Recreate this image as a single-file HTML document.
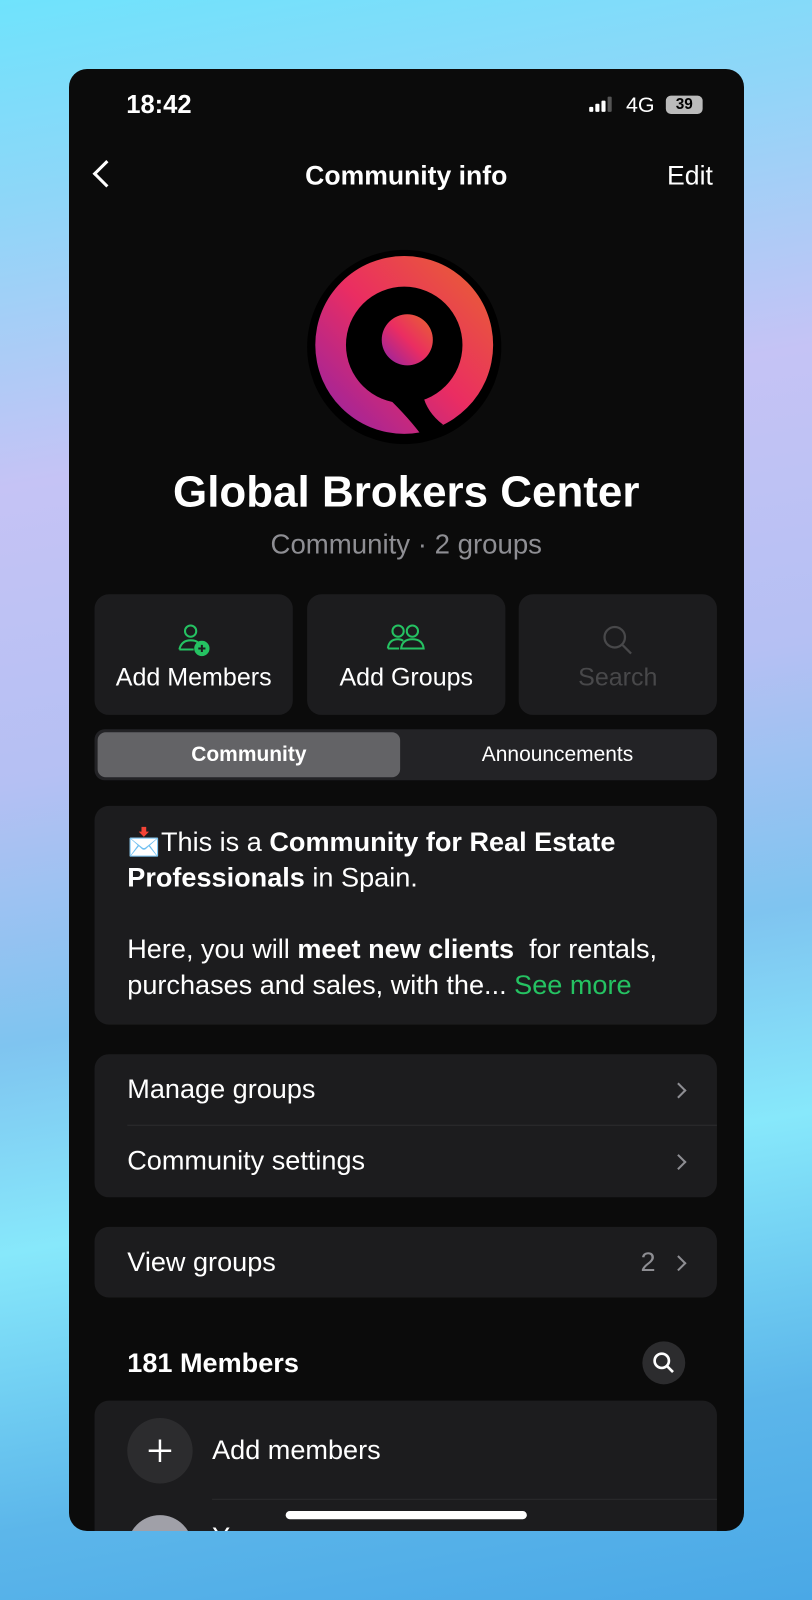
<!DOCTYPE html>
<html><head><meta charset="utf-8"><style>
*{margin:0;padding:0;box-sizing:border-box}
body{width:812px;height:1600px;overflow:hidden;font-family:"Liberation Sans",sans-serif;
background:linear-gradient(170deg,#6fe3fc 0%,#8fd6f8 12%,#c5c3f5 28%,#b5c0f3 45%,#7fc4f0 60%,#87e8fb 72%,#5cb6ea 88%,#4aa8e6 100%);position:relative}
.ph{position:absolute;left:69px;top:69px;width:675px;height:1462px;background:#0b0b0b;border-radius:18px;overflow:hidden;color:#fff}
.in{position:absolute;left:0;top:0;width:660px;height:1430px;transform:scale(1.022);transform-origin:0 0}
.a{position:absolute}
.card{position:absolute;left:25px;width:609px;background:#1c1c1e;border-radius:14px}
.btn{position:absolute;top:514px;width:194px;height:118px;background:#1c1c1e;border-radius:14px;text-align:center;font-size:24.5px}
.btn svg{position:absolute;left:80px;top:28px}
.btn span{position:absolute;left:0;right:0;top:68px}
.row{position:absolute;left:32px;font-size:26.5px}
.chev{position:absolute;right:32px;width:11px;height:11px;border-right:2px solid #8e8e93;border-top:2px solid #8e8e93;transform:rotate(45deg)}
</style></head><body>
<div class="ph"><div class="in">
<div class="a" style="left:56px;top:21px;font-size:25px;font-weight:bold">18:42</div>
<div class="a" style="left:509px;top:27px;display:flex;align-items:flex-end;gap:2px">
<div style="width:4px;height:5px;background:#fff;border-radius:1px"></div><div style="width:4px;height:8px;background:#fff;border-radius:1px"></div><div style="width:4px;height:11px;background:#fff;border-radius:1px"></div><div style="width:4px;height:15px;background:#555;border-radius:1px"></div></div>
<div class="a" style="left:545px;top:24px;font-size:21px">4G</div>
<div class="a" style="left:584px;top:26px;width:36px;height:18px;background:#bbb;border-radius:5px;color:#000;font-size:15px;font-weight:bold;text-align:center;line-height:18px">39</div>
<div class="a" style="left:27px;top:93px;width:19px;height:19px;border-left:3px solid #fff;border-bottom:3px solid #fff;transform:rotate(45deg)"></div>
<div class="a" style="left:0;right:0;top:89px;text-align:center;font-size:26px;font-weight:bold">Community info</div>
<div class="a" style="right:30px;top:89px;font-size:26px">Edit</div>
<svg class="a" style="left:232px;top:176px" width="192" height="192" viewBox="0 0 192 192">
<defs><linearGradient id="g" x1="1" y1="0" x2="0" y2="1"><stop offset="0" stop-color="#e8652f"/><stop offset=".5" stop-color="#ea2d62"/><stop offset="1" stop-color="#8f22a8"/></linearGradient></defs>
<circle cx="96" cy="96" r="95" fill="#000"/>
<circle cx="96" cy="94" r="87" fill="url(#g)"/>
<circle cx="96" cy="94" r="57" fill="#000"/>
<path d="M72 138 Q96 160 112 181 Q124 180 134 172 Q118 160 114 142 Z" fill="#000"/>
<circle cx="99" cy="89" r="25" fill="url(#g)"/>
</svg>
<div class="a" style="left:-20px;right:-20px;top:390px;text-align:center;font-size:43px;font-weight:bold">Global Brokers Center</div>
<div class="a" style="left:0;right:0;top:450px;text-align:center;font-size:27px;color:#8e8e93">Community · 2 groups</div>
<div class="btn" style="left:25px"><svg width="34" height="34" viewBox="0 0 34 34" fill="none" stroke="#25c262" stroke-width="2"><circle cx="14" cy="8" r="5.5"/><path d="M3 26 Q5 17 14 17 Q19 17 21 19"/><path d="M3 26H17"/><circle cx="25" cy="25" r="6.5" fill="#25c262"/><path d="M25 21.5v7M21.5 25h7" stroke="#1c1c1e"/></svg><span>Add Members</span></div>
<div class="btn" style="left:233px"><svg width="40" height="34" viewBox="0 0 40 34" fill="none" stroke="#25c262" stroke-width="2" style="left:77px"><circle cx="12" cy="8" r="5.5"/><circle cx="26" cy="8" r="5.5"/><path d="M2 25 Q3 16 12 16 Q15 16 17 17.5"/><path d="M2 25H13"/><path d="M15 25 Q16 16 26 16 Q36 16 37 25Z"/></svg><span>Add Groups</span></div>
<div class="btn" style="left:440px;color:#48484a"><svg width="34" height="34" viewBox="0 0 34 34" fill="none" stroke="#48484a" stroke-width="2.2"><circle cx="14" cy="14" r="10"/><path d="M21 21l9 9"/></svg><span>Search</span></div>
<div class="a" style="left:25px;top:646px;width:609px;height:50px;background:#232326;border-radius:10px"></div>
<div class="a" style="left:28px;top:649px;width:296px;height:44px;background:#636366;border-radius:8px;text-align:center;line-height:44px;font-size:20.5px;font-weight:bold">Community</div>
<div class="a" style="left:324px;top:649px;width:308px;height:44px;text-align:center;line-height:44px;font-size:20.5px">Announcements</div>
<div class="card" style="top:721px;height:214px;padding:18px 20px 0 32px;font-size:26.5px;line-height:35px;white-space:nowrap">📩This is a <b>Community for Real Estate</b><br><b>Professionals</b> in Spain.<br><br>Here, you will <b>meet new clients</b>&nbsp; for rentals,<br>purchases and sales, with the... <span style="color:#25c262">See more</span></div>
<div class="card" style="top:964px;height:140px">
<div class="row" style="top:19px">Manage groups</div><div class="chev" style="top:30px"></div>
<div class="a" style="left:32px;right:0;top:69px;height:1px;background:#2c2c2e"></div>
<div class="row" style="top:89px">Community settings</div><div class="chev" style="top:100px"></div>
</div>
<div class="card" style="top:1133px;height:69px">
<div class="row" style="top:19px">View groups</div><div class="a" style="right:60px;top:19px;font-size:26.5px;color:#8e8e93">2</div><div class="chev" style="top:30px"></div>
</div>
<div class="a" style="left:57px;top:1251px;font-size:26.5px;font-weight:bold">181 Members</div>
<div class="a" style="left:561px;top:1245px;width:42px;height:42px;border-radius:50%;background:#2c2c2e"><svg width="42" height="42" viewBox="0 0 42 42" fill="none" stroke="#fff" stroke-width="2.6"><circle cx="19" cy="19" r="7"/><path d="M24 24l6 6"/></svg></div>
<div class="card" style="top:1303px;height:200px">
<div class="a" style="left:32px;top:17px;width:64px;height:64px;border-radius:50%;background:#2c2c2e"><svg width="64" height="64" viewBox="0 0 64 64" stroke="#fff" stroke-width="2.4"><path d="M32 21v22M21 32h22"/></svg></div>
<div class="a" style="left:115px;top:33px;font-size:26.5px">Add members</div>
<div class="a" style="left:115px;right:0;top:96px;height:1px;background:#2c2c2e"></div>
<div class="a" style="left:32px;top:112px;width:64px;height:64px;border-radius:50%;background:#a0a0a8"></div>
<div class="a" style="left:115px;top:118px;font-size:26.5px">You</div>
</div>
<div class="a" style="left:212px;top:1411px;width:236px;height:8px;border-radius:4px;background:#fff"></div>
</div></div>
</body></html>
